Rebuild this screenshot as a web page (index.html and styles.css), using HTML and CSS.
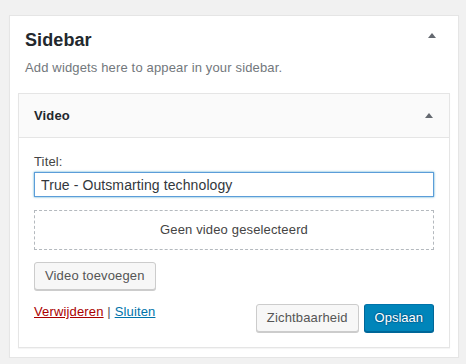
FILE: index.html
```html
<!DOCTYPE html>
<html lang="nl">
<head>
  <meta charset="UTF-8">
  <title>Widgets</title>
  <link rel="stylesheet" href="styles.css">
</head>
<body>
  <div class="sidebar-box">
    <div class="sidebar-name">
      <h2>Sidebar</h2>
      <span class="toggle toggle-big"></span>
    </div>
    <p class="sidebar-description">Add widgets here to appear in your sidebar.</p>

    <div class="widget">
      <div class="widget-top">
        <h3>Video</h3>
        <span class="toggle"></span>
      </div>
      <div class="widget-inside">
        <label class="field-label" for="title">Titel:</label>
        <input class="field-input" id="title" type="text" value="True - Outsmarting technology">

        <div class="media-placeholder">Geen video geselecteerd</div>

        <div class="add-row">
          <a href="javascript:;" class="button">Video toevoegen</a>
        </div>

        <div class="widget-actions">
          <div class="action-links">
            <a href="javascript:;" class="link-delete">Verwijderen</a> | <a href="javascript:;" class="link-close">Sluiten</a>
          </div>
          <div class="action-buttons">
            <a href="javascript:;" class="button">Zichtbaarheid</a>
            <a href="javascript:;" class="button button-primary">Opslaan</a>
          </div>
        </div>
      </div>
    </div>
  </div>
</body>
</html>
```

FILE: styles.css
```css
* {
  margin: 0;
  padding: 0;
  box-sizing: border-box;
}
body {
  background: #f1f1f1;
  font-family: "Liberation Sans", Arial, sans-serif;
  font-size: 13px;
  letter-spacing: 0.15px;
  color: #444;
}
a {
  text-decoration: none;
}

.sidebar-box {
  width: 450px;
  margin: 15px 0 0 9px;
  padding: 0 8px 9px;
  background: #fff;
  border: 1px solid #e5e5e5;
  box-shadow: 0 1px 1px rgba(0, 0, 0, .04);
}
.sidebar-name {
  display: flex;
  justify-content: space-between;
  align-items: flex-start;
  padding: 12px 14px 0 7px;
}
.sidebar-name h2 {
  font-size: 18px;
  line-height: 24px;
  font-weight: bold;
  letter-spacing: 0.1px;
  color: #23282d;
}
.sidebar-description {
  margin: 7px 0 16px;
  padding: 0 7px;
  line-height: 18px;
  color: #72777c;
}

/* small arrow used in the headers */
.toggle {
  width: 0;
  height: 0;
  border-left: 4px solid transparent;
  border-right: 4px solid transparent;
  border-bottom: 5px solid #646970;
}
.toggle-big {
  margin-top: 5px;
}

.widget {
  border: 1px solid #e5e5e5;
  box-shadow: 0 1px 1px rgba(0, 0, 0, .04);
}
.widget-top {
  display: flex;
  justify-content: space-between;
  align-items: center;
  padding: 15px 16px 15px 15px;
  background: #fafafa;
}
.widget-top h3 {
  font-size: 13px;
  line-height: 13px;
  font-weight: bold;
  color: #23282d;
}
.widget-inside {
  padding: 15px;
  border-top: 1px solid #e5e5e5;
  background: #fff;
}

.field-label {
  display: block;
  line-height: 18px;
  color: #444;
}
.field-input {
  display: block;
  width: 100%;
  height: 25px;
  margin-top: 1px;
  padding: 0 6px;
  font-family: "Liberation Sans", Arial, sans-serif;
  font-size: 14px;
  letter-spacing: 0.1px;
  color: #32373c;
  border: 1px solid #5b9dd9;
  border-radius: 0;
  box-shadow: 0 0 2px rgba(30, 140, 190, .8);
  outline: none;
}

.media-placeholder {
  height: 40px;
  margin-top: 13px;
  border: 1px dashed #b4b9be;
  line-height: 38px;
  text-align: center;
  color: #444;
}

.add-row {
  margin-top: 12px;
}

.button {
  display: inline-block;
  height: 28px;
  padding: 0 10px 1px;
  line-height: 26px;
  font-size: 13px;
  color: #555;
  background: #f7f7f7;
  border: 1px solid #ccc;
  border-radius: 3px;
  box-shadow: 0 1px 0 #ccc;
  white-space: nowrap;
}
.button-primary {
  color: #fff;
  letter-spacing: 0;
  background: #0085ba;
  border-color: #0073aa #006799 #006799;
  box-shadow: 0 1px 0 #006799;
  text-shadow: 0 -1px 1px #006799, 1px 0 1px #006799, 0 1px 1px #006799, -1px 0 1px #006799;
}

.widget-actions {
  display: flex;
  justify-content: space-between;
  align-items: flex-start;
  margin-top: 14px;
}
.action-links {
  line-height: 16px;
  color: #555;
}
.link-delete {
  color: #a00;
  text-decoration: underline;
}
.link-close {
  color: #0073aa;
  text-decoration: underline;
}
.action-buttons {
  display: flex;
  gap: 5px;
}
```
